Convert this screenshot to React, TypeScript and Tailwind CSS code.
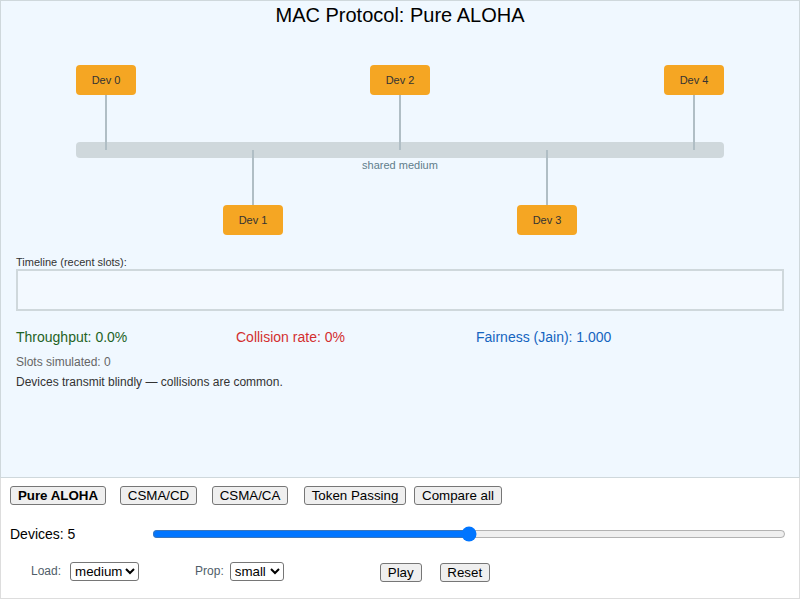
import React from "react";

const DEVICES = [0, 1, 2, 3, 4];

const Diagram = () => {
  return (
    <svg
      className="block"
      width={798}
      height={229}
      viewBox="1 27 798 229"
      xmlns="http://www.w3.org/2000/svg"
    >
      {/* shared bus */}
      <rect x={76} y={142} width={648} height={16} rx={4} fill="#cfd8dc" />
      {DEVICES.map((i) => {
        const cx = 106 + 147 * i;
        const top = i % 2 === 0;
        return (
          <line
            key={`l${i}`}
            x1={cx}
            x2={cx}
            y1={top ? 95 : 150}
            y2={top ? 150 : 205}
            stroke="#b0bec5"
            strokeWidth={2}
          />
        );
      })}
      <text x={400} y={169} textAnchor="middle" fontSize={11} fill="#607d8b">
        shared medium
      </text>
      {DEVICES.map((i) => {
        const cx = 106 + 147 * i;
        const y = i % 2 === 0 ? 65 : 205;
        return (
          <g key={`d${i}`}>
            <rect x={cx - 30} y={y} width={60} height={30} rx={4} fill="#f5a623" />
            <text x={cx} y={y + 19} textAnchor="middle" fontSize={11} fill="#333">
              Dev {i}
            </text>
          </g>
        );
      })}
    </svg>
  );
};

const Btn = ({
  children,
  className = "",
}: {
  children: React.ReactNode;
  className?: string;
}) => (
  <button className={`h-[19px] px-[6px] border border-[#767676] rounded-[3px] bg-[#efefef] text-[13.33px] leading-[15px] text-black ${className}`}>
    {children}
  </button>
);

export default function App() {
  return (
    <div className="w-[800px] h-[602px] bg-white font-['Liberation_Sans',Arial,sans-serif] text-black">
      {/* simulation view */}
      <div className="h-[478px] border border-[#cfd8dc] bg-[#f0f8ff]">
        <div className="pt-[3px] text-center text-[20px] leading-[23px]">
          MAC Protocol: Pure ALOHA
        </div>
        <Diagram />
        <div className="px-[15px]">
          <div className="text-[11px] leading-[13px] text-[#333]">
            Timeline (recent slots):
          </div>
          <div className="h-[42px] border-2 border-[#cfd8dc] bg-[#f3f9ff]" />
          <div className="mt-[18px] flex text-[14px] leading-[16px]">
            <div className="w-[220px] text-[#1f6325]">Throughput: 0.0%</div>
            <div className="w-[240px] text-[#d32f2f]">Collision rate: 0%</div>
            <div className="text-[#1565c0]">Fairness (Jain): 1.000</div>
          </div>
          <div className="mt-[10px] text-[12px] leading-[14px] text-[#666]">
            Slots simulated: 0
          </div>
          <div className="mt-[6px] text-[12px] leading-[14px] text-[#333]">
            Devices transmit blindly — collisions are common.
          </div>
        </div>
      </div>

      {/* controls */}
      <div className="h-[121px] border border-t-0 border-[#dddddd] pl-[9px] pt-[8px]">
        <div className="flex items-center">
          <Btn className="w-[96px] font-bold">Pure ALOHA</Btn>
          <Btn className="ml-[14px] w-[77px]">CSMA/CD</Btn>
          <Btn className="ml-[15px] w-[76px]">CSMA/CA</Btn>
          <Btn className="ml-[16px] w-[102px]">Token Passing</Btn>
          <Btn className="ml-[8px] w-[88px]">Compare all</Btn>
        </div>
        <div className="mt-[19px] flex h-[20px] items-center">
          <div className="w-[142px] text-[14px] leading-[16px]">Devices: 5</div>
          <input
            type="range"
            min={2}
            max={8}
            defaultValue={5}
            className="m-0 h-[16px] w-[634px]"
          />
        </div>
        <div className="mt-[17px] flex h-[20px] items-center text-[12px] leading-[14px] text-[#4f5d69]">
          <span className="ml-[21px]">Load:</span>
          <select
            defaultValue="medium"
            className="ml-[9px] h-[19px] w-[69px] rounded-[3px] border border-[#767676] bg-white text-[13.33px] text-black"
          >
            <option value="low">low</option>
            <option value="medium">medium</option>
            <option value="high">high</option>
          </select>
          <span className="ml-[56px]">Prop:</span>
          <select
            defaultValue="small"
            className="ml-[6px] h-[19px] w-[54px] rounded-[3px] border border-[#767676] bg-white text-[13.33px] text-black"
          >
            <option value="small">small</option>
            <option value="large">large</option>
          </select>
          <Btn className="ml-[96px] mt-[2px] w-[42px]">Play</Btn>
          <Btn className="ml-[18px] mt-[2px] w-[50px]">Reset</Btn>
        </div>
      </div>
    </div>
  );
}
